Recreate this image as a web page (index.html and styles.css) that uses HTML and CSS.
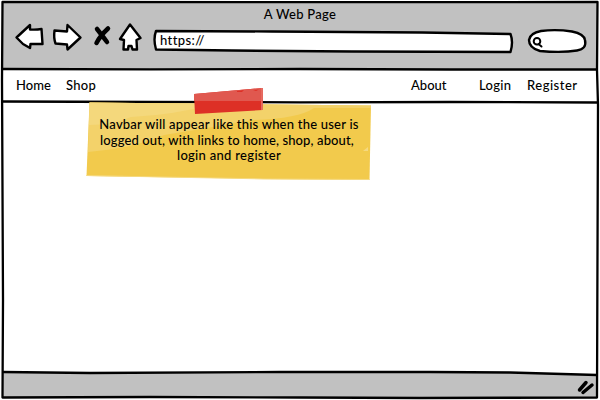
FILE: index.html
```html
<!DOCTYPE html>
<html lang="en">
<head>
<meta charset="utf-8">
<title>A Web Page</title>
<link rel="stylesheet" href="styles.css">
</head>
<body>
<div class="browser">
  <svg class="frame" viewBox="0 0 600 400" aria-hidden="true">
    <path class="chrome" d="M3 2H597V69.500L3 69ZM3 372L90 373 280 372 500 372 597 375V397L3 397.500Z"/>
    <path class="rule" d="M2.500 2L300 2.200 597.500 2 597 70 598 105 597 397.500 420 398 300 397.500 150 397 2.500 397.500 3 300 2 80Z"/>
    <path class="rule" d="M3 69L150 69.300 300 69 450 69.500 597 69.500M3 101.500L150 102 300 102.300 450 102 597 102.500M3 372L90 373 280 372 430 372 510 372.500 597 375"/>
  </svg>
  <header class="toolbar">
    <h1 class="title">A Web Page</h1>
    <div class="controls">
      <svg class="buttons" viewBox="0 0 130 32" aria-hidden="true">
        <path class="shape" d="M3.500 15.500L17 3 17 7.500Q23 8 28.500 7L29.500 22 17.500 22 17 26 10 22Z"/>
        <path class="shape" d="M41.500 8.500L54 9.500 54.500 3 67.500 15.500 54.500 27.500 54 22.500 42.500 21.500Q40.500 16 41.500 8.500Z"/>
        <path class="cross" d="M84 7Q88 12 94 20M95 6.500Q87 14 83.500 21"/>
        <path class="shape" d="M117 2.500L127.500 16 123.500 18 124 27.500 119.500 27.500 118.500 24 115.500 24 115 27.500 110.500 27.500 111 18 107 17Z"/>
      </svg>
      <div class="address">
        <svg class="outline" viewBox="0 0 362 26" aria-hidden="true"><path class="shape" d="M4 3L120 3.500 270 4.500 358.500 6Q361.500 14 358.500 24L200 23.500 80 22.500 4 21.500Q1 11 4 3Z"/></svg>
        <span class="url">https://</span>
      </div>
      <svg class="search" viewBox="0 0 64 28" aria-hidden="true">
        <path class="shape" d="M4 13Q5 6 16 4Q31 2 47 4.500Q59 7 60 13Q62 22 52 23.500Q37 26 15 24Q4 21 4 13Z"/>
        <path class="lens" d="M12 11A3.300 3.300 0 1 0 12 17.600A3.300 3.300 0 1 0 12 11ZM13.500 17L16.500 19.500"/>
      </svg>
    </div>
  </header>
  <nav class="navbar">
    <a class="home">Home</a><a class="shop">Shop</a>
    <a class="about">About</a><a class="login">Login</a><a class="register">Register</a>
  </nav>
  <main class="content"></main>
  <footer class="status">
    <svg class="grip" viewBox="0 0 20 18" aria-hidden="true"><path d="M3.500 12L10 4.500M7 14.500L16 7"/></svg>
  </footer>
  <aside class="note">
    <svg class="paper" viewBox="0 0 290 96" aria-hidden="true">
      <path fill="#f2ca4c" d="M5.500 16.500L287 19.500 285.500 94 180 93 2.500 90Z"/>
      <path fill="#f3d26a" d="M5.500 16.500L287 19.500V22L230 22Q214 33 168 34Q125 42 80 49Q50 62 4 66Z"/>
      <path fill="#f4d87c" d="M5.500 16.500L130 18Q90 29 47 31Q28 39 5 39Z"/>
      <path fill="#f5d980" d="M2.500 89L49 90 180 92.500 285.500 93V94L180 93.500 2.500 90ZM279 65L284 61V65Z"/>
      <path fill="#dd3026" d="M110 8L179 2 178.500 24 111 28Z"/>
      <path fill="#e0584f" d="M110 8L179 2V15H110Z"/>
      <path fill="#e66b61" d="M177 2H179L178.500 24H177Z"/>
      <path fill="#dd3026" d="M153 5L160 4 158 6 153 6ZM169 4L175 3.500 172 5Z"/>
    </svg>
    <p class="text"><span class="l1">Navbar will appear like this when the user is</span><span class="l2">logged out, with links to home, shop, about,</span><span class="l3">login and register</span></p>
  </aside>
</div>
</body>
</html>
```
FILE: styles.css
```css
* { box-sizing: border-box; }
body { margin: 0; background: #fff; color: #000; font: 500 13px/16px Lato, "Open Sans", sans-serif; }
.browser { position: relative; width: 600px; height: 400px; display: flex; flex-direction: column; overflow: hidden; }
.frame { position: absolute; inset: 0; width: 600px; height: 400px; }
.chrome { fill: #c1c1c1; }
.rule { fill: none; stroke: #000; stroke-width: 2.3; stroke-linejoin: round; }
.shape { fill: #fff; stroke: #000; stroke-width: 2.4; stroke-linejoin: round; }
.toolbar { position: relative; height: 69px; padding-top: 6px; }
.title { margin: 0; font-size: 13px; line-height: 16px; font-weight: 500; text-align: center; letter-spacing: .3px; }
.controls { display: flex; align-items: flex-start; padding-left: 13px; }
.buttons { width: 130px; height: 32px; }
.cross { fill: none; stroke: #000; stroke-width: 4.5; stroke-linecap: round; }
.address { position: relative; width: 362px; height: 26px; margin: 6px 0 0 9px; padding: 4px 0 0 8px; }
.outline { position: absolute; inset: 0; width: 362px; height: 26px; }
.url { position: relative; letter-spacing: .4px; }
.search { width: 64px; height: 28px; margin: 5px 0 0 11px; }
.lens { fill: none; stroke: #000; stroke-width: 2; stroke-linecap: round; }
.navbar { position: relative; display: flex; align-items: center; height: 33px; padding: 0 22px 2px 16px; }
.navbar a { white-space: nowrap; letter-spacing: .3px; }
.navbar .home { width: 50px; letter-spacing: 0; }
.shop { width: 345px; }
.navbar .about { width: 68px; letter-spacing: 0; }
.login { width: 48px; }
.navbar .register { letter-spacing: .5px; }
.content { flex: 1; }
.status { position: relative; height: 27px; display: flex; justify-content: flex-end; padding: 5px 4px 0 0; }
.grip { width: 20px; height: 18px; fill: none; stroke: #000; stroke-width: 3.5; stroke-linecap: round; }
.note { position: absolute; left: 84px; top: 86px; width: 290px; height: 96px; padding-top: 31px; }
.paper { position: absolute; inset: 0; width: 290px; height: 96px; }
.text { position: relative; margin: 0; line-height: 15.5px; text-align: center; }
.text span { display: block; white-space: nowrap; letter-spacing: .3px; }
.text .l1 { letter-spacing: .22px; }
.text .l2 { letter-spacing: .12px; padding-right: 4px; }
```
